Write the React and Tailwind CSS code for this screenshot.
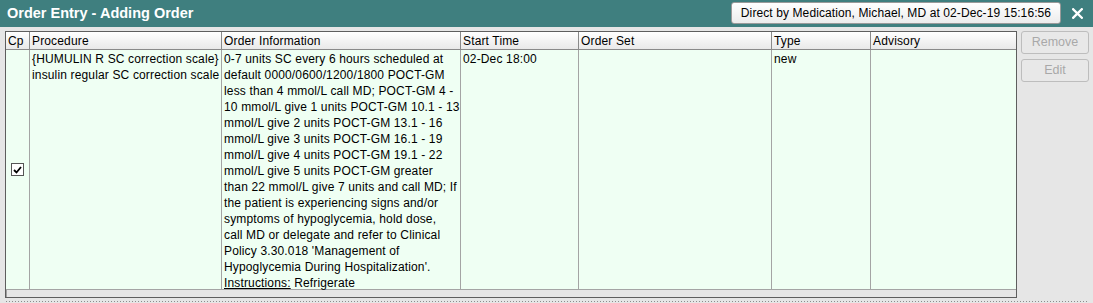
import React from "react";

const infoLines = [
  "0-7 units SC every 6 hours scheduled at",
  "default 0000/0600/1200/1800 POCT-GM",
  "less than 4 mmol/L call MD; POCT-GM 4 -",
  "10 mmol/L give 1 units POCT-GM 10.1 - 13",
  "mmol/L give 2 units POCT-GM 13.1 - 16",
  "mmol/L give 3 units POCT-GM 16.1 - 19",
  "mmol/L give 4 units POCT-GM 19.1 - 22",
  "mmol/L give 5 units POCT-GM greater",
  "than 22 mmol/L give 7 units and call MD; If",
  "the patient is experiencing signs and/or",
  "symptoms of hypoglycemia, hold dose,",
  "call MD or delegate and refer to Clinical",
  "Policy 3.30.018 'Management of",
  "Hypoglycemia During Hospitalization'.",
];

const cols = [
  { name: "Cp", w: "w-[24px]" },
  { name: "Procedure", w: "w-[192px]" },
  { name: "Order Information", w: "w-[239px]" },
  { name: "Start Time", w: "w-[118px]" },
  { name: "Order Set", w: "w-[193px]" },
  { name: "Type", w: "w-[99px]" },
  { name: "Advisory", w: "flex-1" },
];

export default function App() {
  return (
    <div className="w-[1093px] h-[303px] bg-[#e6e6e6] flex flex-col overflow-hidden font-['Liberation_Sans',Arial,sans-serif] text-black">
      {/* Title bar */}
      <div className="h-[27px] bg-[#3f7f7f] flex items-center pl-[7px] pr-[10px] shrink-0">
        <div className="text-white font-bold text-[14.5px] leading-none">Order Entry - Adding Order</div>
        <div className="ml-auto h-[22px] w-[330px] mt-[-1px] rounded-[3px] border border-[#9a9a9a] bg-[linear-gradient(to_bottom,#ffffff,#ececec)] flex items-center justify-center text-[12px] tracking-[0.1px]">
          Direct by Medication, Michael, MD at 02-Dec-19 15:16:56
        </div>
        <svg className="ml-[11px]" width="11" height="11" viewBox="0 0 11 11">
          <path d="M1.2 1.2 L9.8 9.8 M9.8 1.2 L1.2 9.8" stroke="#ffffff" strokeWidth="2.3" strokeLinecap="square" />
        </svg>
      </div>

      {/* Body */}
      <div className="flex pt-[4px] pl-[5px]">
        <div className="w-[1012px] h-[267px] border border-[#5e5e5e] shadow-[inset_1px_1px_0_#a0a0a0] flex flex-col text-[12px] tracking-[0.15px]">
          {/* header */}
          <div className="h-[18px] flex bg-[linear-gradient(to_bottom,#ffffff,#e9e9e9)] border-b border-[#8a8a8a] shrink-0">
            {cols.map((c, i) => (
              <div
                key={c.name}
                className={`${c.w} ${i < cols.length - 1 ? "border-r border-[#8a8a8a]" : ""} pl-[2px] pt-[1px] leading-[17px] whitespace-nowrap`}
              >
                {c.name}
              </div>
            ))}
          </div>
          {/* data row */}
          <div className="h-[240px] flex bg-[#effff3] border-b border-[#a4a4a4] shrink-0 leading-[16px]">
            <div className="w-[24px] border-r border-[#a4a4a4] flex items-center justify-center pr-[1px]">
              <div className="w-[13px] h-[13px] border border-[#555555] bg-white flex items-center justify-center">
                <svg width="9" height="8" viewBox="0 0 9 8">
                  <path d="M1 4 L3.5 6.5 L8 1" stroke="#000" strokeWidth="1.8" fill="none" />
                </svg>
              </div>
            </div>
            <div className="w-[192px] border-r border-[#a4a4a4] pl-[2px] pt-[1px] whitespace-nowrap">
              <div>{"{HUMULIN R SC correction scale}"}</div>
              <div>insulin regular SC correction scale</div>
            </div>
            <div className="w-[239px] border-r border-[#a4a4a4] pl-[2px] pt-[1px] whitespace-nowrap">
              {infoLines.map((l) => (
                <div key={l}>{l}</div>
              ))}
              <div>
                <span className="underline">Instructions:</span> Refrigerate
              </div>
            </div>
            <div className="w-[118px] border-r border-[#a4a4a4] pl-[2px] pt-[1px]">02-Dec 18:00</div>
            <div className="w-[193px] border-r border-[#a4a4a4]" />
            <div className="w-[99px] border-r border-[#a4a4a4] pl-[2px] pt-[1px]">new</div>
            <div className="flex-1" />
          </div>
          <div className="flex-1" />
        </div>

        {/* side buttons */}
        <div className="ml-[4px] flex flex-col gap-[5px]">
          <div className="w-[68px] h-[23px] rounded-[3px] border border-[#bdbdbd] bg-[#e8e8e8] flex items-center justify-center text-[12.5px] text-[#a8a8a8]">
            Remove
          </div>
          <div className="w-[68px] h-[23px] rounded-[3px] border border-[#bdbdbd] bg-[#e8e8e8] flex items-center justify-center text-[12.5px] text-[#a8a8a8]">
            Edit
          </div>
        </div>
      </div>

      {/* dotted separator */}
      <div className="mt-[3px] ml-[6px] mr-[4px] h-[1px] bg-[linear-gradient(to_right,#8c8c8c_1px,transparent_1px)] bg-[length:3px_1px]" />
    </div>
  );
}
